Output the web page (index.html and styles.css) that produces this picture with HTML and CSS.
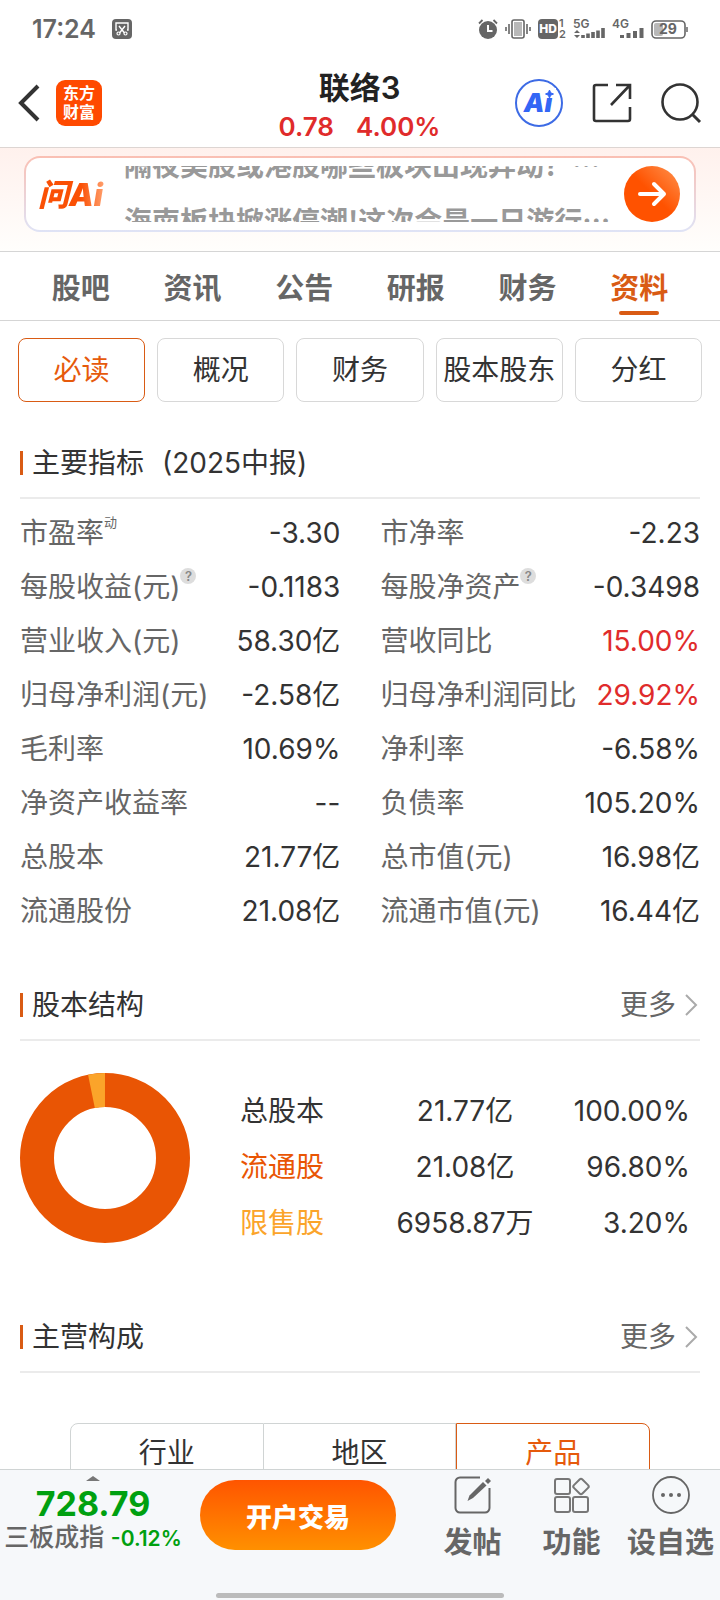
FILE: index.html
```html
<!DOCTYPE html>
<html lang="zh-CN">
<head>
<title>联络3</title>
<meta charset="utf-8">
<meta name="viewport" content="width=device-width, initial-scale=1">
<link rel="stylesheet" href="styles.css">
</head>
<body>

<div class="status">
  <span class="time">17:24</span>
  <svg width="20" height="20" viewBox="0 0 20 20">
    <rect width="20" height="20" rx="4" fill="#666"/>
    <path d="M5 11H4V4h12v7h-1" fill="none" stroke="#fff" stroke-width="1.4"/>
    <path d="M7 7l5.500 7M13 7l-5.500 7" stroke="#fff" stroke-width="1.400"/>
    <circle cx="6.500" cy="14.500" r="1.500" fill="none" stroke="#fff" stroke-width="1.200"/>
    <circle cx="13.500" cy="14.500" r="1.500" fill="none" stroke="#fff" stroke-width="1.200"/>
  </svg>
  <div class="status-icons">
    <svg width="20" height="20" viewBox="0 0 20 20">
      <circle cx="10" cy="11" r="9" fill="#666"/>
      <path d="M10 6v6h4.500" fill="none" stroke="#fff" stroke-width="2"/>
      <path d="M1 4.500L4.500 1M19 4.500L15.500 1" stroke="#666" stroke-width="1.800"/>
    </svg>
    <svg width="26" height="20" viewBox="0 0 26 20">
      <rect x="7" y="1" width="12" height="18" rx="2" fill="none" stroke="#666" stroke-width="1.600"/>
      <rect x="9" y="3" width="8" height="14" fill="#b8b8b8"/>
      <path d="M1 8v4M4 5v10M22 5v10M25 8v4" stroke="#666" stroke-width="1.600"/>
    </svg>
    <svg width="28" height="20" viewBox="0 0 28 20">
      <rect width="20" height="20" rx="4" fill="#666"/>
      <text x="10" y="14" text-anchor="middle" font-size="12" font-weight="800" fill="#fff">HD</text>
      <text x="21" y="8" font-size="11" font-weight="600" fill="#666">1</text>
      <text x="21" y="19" font-size="11" font-weight="600" fill="#666">2</text>
    </svg>
    <svg width="32" height="20" viewBox="0 0 32 20">
      <text x="0" y="9" font-size="12" font-weight="600" fill="#666">5G</text>
      <path d="M1 14l3-3 3 3zM1 16l3 3 3-3z" fill="#666"/>
      <path d="M10 16v3M15 14.500v4.500M20 13v6M25 11.500v7.500M30 9v10" stroke="#666" stroke-width="3.600"/>
    </svg>
    <svg width="32" height="20" viewBox="0 0 32 20">
      <text x="0" y="9" font-size="12" font-weight="600" fill="#666">4G</text>
      <path d="M10 16v3M16.500 14v5M23 12v7M29.500 9v10" stroke="#666" stroke-width="4"/>
    </svg>
    <svg width="37" height="20" viewBox="0 0 37 20">
      <rect x="1" y="2" width="33" height="17" rx="4" fill="none" stroke="#666" stroke-width="1.600"/>
      <rect x="3" y="4" width="9" height="13" rx="2" fill="#b8b8b8"/>
      <path d="M36 8v5" stroke="#666" stroke-width="1.500"/>
      <text x="17" y="15" text-anchor="middle" font-size="14" font-weight="700" fill="#666">29</text>
    </svg>
  </div>
</div>

<header class="header">
  <div class="header-side">
    <a href="#" aria-label="返回">
      <svg width="22" height="38" viewBox="0 0 22 38"><path d="M20 2L3 19l17 17" fill="none" stroke="#333" stroke-width="4"/></svg>
    </a>
    <a class="logo" href="#">东方<br>财富</a>
  </div>
  <div class="header-title">
    <h1>联络3</h1>
    <p class="quote"><span>0.78</span><span>4.00%</span></p>
  </div>
  <div class="header-side header-right">
    <button type="button" aria-label="Ai">
      <svg width="48" height="48" viewBox="0 0 48 48">
        <circle cx="24" cy="24" r="23" fill="none" stroke="#3d6be5" stroke-width="2"/>
        <text x="23" y="33" text-anchor="middle" font-size="26" font-weight="900" font-style="italic" fill="#3366f5">Ai</text>
        <path d="M29 9h12v10H29z" fill="#fff"/>
        <path d="M34.500 11l1.200 2.800 2.800 1.200-2.800 1.200-1.200 2.800-1.200-2.800-2.800-1.200 2.800-1.200z" fill="#3366f5" stroke="#3366f5"/>
      </svg>
    </button>
    <button type="button" aria-label="分享">
      <svg width="40" height="40" viewBox="0 0 40 40" fill="none" stroke="#333" stroke-width="2.600">
        <path d="M16 2H4a2 2 0 0 0-2 2v32a2 2 0 0 0 2 2h32a2 2 0 0 0 2-2V24"/>
        <path d="M24 2h14v14M38 2L19 22"/>
      </svg>
    </button>
    <button type="button" aria-label="搜索">
      <svg width="40" height="40" viewBox="0 0 40 40" fill="none" stroke="#333" stroke-width="2.600">
        <circle cx="19" cy="19" r="17.500"/>
        <path d="M31 31l8 8" stroke-width="3"/>
      </svg>
    </button>
  </div>
</header>

<div class="banner">
  <div class="ask">
    <span class="ask-logo">问Ai</span>
    <div class="ticker">
      <div class="ticker-lines">
        <p>隔夜美股或港股哪些板块出现异动？…</p>
        <p>海南板块掀涨停潮!这次会是一日游行…</p>
      </div>
    </div>
    <button class="go" type="button" aria-label="提问">
      <svg width="30" height="26" viewBox="0 0 30 26" fill="none" stroke="#fff" stroke-width="4" stroke-linecap="round" stroke-linejoin="round"><path d="M3 13h24M17 3l10 10-10 10"/></svg>
    </button>
  </div>
</div>

<nav class="tabs">
  <a href="#">股吧</a>
  <a href="#">资讯</a>
  <a href="#">公告</a>
  <a href="#">研报</a>
  <a href="#">财务</a>
  <a href="#" class="active">资料</a>
</nav>

<main>
  <div class="chips">
    <button type="button" class="active">必读</button>
    <button type="button">概况</button>
    <button type="button">财务</button>
    <button type="button">股本股东</button>
    <button type="button">分红</button>
  </div>

  <section>
    <div class="section-head">
      <h2>主要指标<span class="period">(2025中报)</span></h2>
    </div>
    <table class="metrics">
      <tr><th>市盈率<sup>动</sup></th><td>-3.30</td><th>市净率</th><td>-2.23</td></tr>
      <tr><th>每股收益(元)<sup class="help">?</sup></th><td>-0.1183</td><th>每股净资产<sup class="help">?</sup></th><td>-0.3498</td></tr>
      <tr><th>营业收入(元)</th><td>58.30亿</td><th>营收同比</th><td class="up">15.00%</td></tr>
      <tr><th>归母净利润(元)</th><td>-2.58亿</td><th>归母净利润同比</th><td class="up">29.92%</td></tr>
      <tr><th>毛利率</th><td>10.69%</td><th>净利率</th><td>-6.58%</td></tr>
      <tr><th>净资产收益率</th><td>--</td><th>负债率</th><td>105.20%</td></tr>
      <tr><th>总股本</th><td>21.77亿</td><th>总市值(元)</th><td>16.98亿</td></tr>
      <tr><th>流通股份</th><td>21.08亿</td><th>流通市值(元)</th><td>16.44亿</td></tr>
    </table>
  </section>

  <section>
    <div class="section-head">
      <h2>股本结构</h2>
      <a class="more" href="#">更多
        <svg width="13" height="22" viewBox="0 0 13 22"><path d="M1 1l10 10L1 21" fill="none" stroke="#aaa" stroke-width="2"/></svg>
      </a>
    </div>
    <div class="shares">
      <svg class="donut" width="170" height="170" viewBox="0 0 170 170" fill="none" stroke-width="34">
        <circle cx="85" cy="85" r="68" stroke="#e95504"/>
        <circle cx="85" cy="85" r="68" stroke="#fba42a" pathLength="100" stroke-dasharray="3.200 96.800" transform="rotate(-101.500 85 85)"/>
      </svg>
      <div class="share-box">
        <table class="share-table">
          <tr><th>总股本</th><td>21.77亿</td><td>100.00%</td></tr>
          <tr><th class="float">流通股</th><td>21.08亿</td><td>96.80%</td></tr>
          <tr><th class="locked">限售股</th><td>6958.87万</td><td>3.20%</td></tr>
        </table>
      </div>
    </div>
  </section>

  <section>
    <div class="section-head">
      <h2>主营构成</h2>
      <a class="more" href="#">更多
        <svg width="13" height="22" viewBox="0 0 13 22"><path d="M1 1l10 10L1 21" fill="none" stroke="#aaa" stroke-width="2"/></svg>
      </a>
    </div>
    <div class="segments">
      <button type="button">行业</button>
      <button type="button">地区</button>
      <button type="button" class="active">产品</button>
    </div>
  </section>
</main>

<footer class="bottom">
  <div class="bar">
    <a class="index" href="#">
      <svg width="14" height="5" viewBox="0 0 14 5"><path d="M0 5l7-5 7 5z" fill="#777"/></svg>
      <strong>728.79</strong>
      <span class="index-name">三板成指 <em>-0.12%</em></span>
    </a>
    <button class="trade" type="button">开户交易</button>
    <div class="actions">
      <a href="#">
        <svg width="38" height="38" viewBox="0 0 38 38" fill="none" stroke="#666" stroke-width="2">
          <path d="M26 1.500H6A4.500 4.500 0 0 0 1.500 6v26A4.500 4.500 0 0 0 6 36.500h25a4.500 4.500 0 0 0 4.500-4.500V12"/>
          <path d="M13.500 25l2-5.500L29 6l3.500 3.500L19 22z" fill="#666" stroke="none"/>
          <path d="M31 5l3-3 3 3-3 3z" fill="#666" stroke="none"/>
        </svg>
        发帖
      </a>
      <a href="#">
        <svg width="38" height="38" viewBox="0 0 38 38" fill="none" stroke="#777" stroke-width="2">
          <rect x="2" y="3" width="15" height="15" rx="2"/>
          <rect x="2" y="21" width="15" height="15" rx="2"/>
          <rect x="20" y="21" width="15" height="15" rx="2"/>
          <rect x="22" y="4.500" width="12" height="12" rx="2" transform="rotate(45 28 10.500)"/>
        </svg>
        功能
      </a>
      <a href="#">
        <svg width="38" height="38" viewBox="0 0 38 38">
          <circle cx="19" cy="19" r="18" fill="none" stroke="#666" stroke-width="1.800"/>
          <g fill="#666"><circle cx="11" cy="19" r="2"/><circle cx="19" cy="19" r="2"/><circle cx="27" cy="19" r="2"/></g>
        </svg>
        设自选
      </a>
    </div>
  </div>
  <div class="home"></div>
</footer>

</body>
</html>
```
FILE: styles.css
```css
* {
  box-sizing: border-box;
}

body {
  display: flex;
  flex-direction: column;
  height: 100vh;
  margin: 0;
  background: #fff;
  color: #333;
  font-family: Inter, "Noto Sans CJK SC", sans-serif;
  font-size: 28px;
}

h1, h2, p {
  margin: 0;
}

a {
  color: inherit;
  text-decoration: none;
}

button {
  padding: 0;
  border: none;
  background: none;
  color: inherit;
  font: inherit;
  cursor: pointer;
}

svg {
  display: block;
  flex: none;
  overflow: visible;
}

/* Phone status bar */
.status {
  display: flex;
  align-items: center;
  gap: 16px;
  height: 58px;
  padding: 0 32px;
  color: #666;
}

.time {
  font-size: 25px;
  font-weight: 600;
}

.status-icons {
  display: flex;
  gap: 7px;
  margin-left: auto;
}

/* Header */
.header {
  display: flex;
  height: 90px;
  padding: 0 19px 0 18px;
  border-bottom: 1px solid #ddd5d2;
}

.header-side {
  display: flex;
  flex: 1;
  align-items: center;
  gap: 16px;
}

.header-right {
  justify-content: flex-end;
  gap: 29px;
}

.logo {
  width: 46px;
  height: 46px;
  padding: 4px 0;
  border-radius: 9px;
  background: #ff4a00;
  color: #fff;
  font-size: 16px;
  font-weight: 700;
  line-height: 19px;
  text-align: center;
}

.header-title {
  padding-top: 10px;
  text-align: center;
}

h1 {
  color: #222;
  font-size: 31px;
  font-weight: 600;
  line-height: 40px;
}

.quote {
  display: flex;
  gap: 22px;
  color: #e02b2b;
  font-size: 26px;
  font-weight: 600;
  line-height: 38px;
}

/* Ask banner */
.banner {
  padding: 8px 24px 19px;
  border-bottom: 1px solid #d5d5d5;
  background: linear-gradient(#fff1ed, #fffefc);
}

.ask {
  display: flex;
  align-items: center;
  height: 76px;
  padding: 0 14px 0 12px;
  border: 2px solid transparent;
  border-radius: 16px;
  background: linear-gradient(#fff, #fff) padding-box, linear-gradient(#fabfb3, #dfe3f6) border-box;
}

.ask-logo {
  width: 86px;
  padding-bottom: 4px;
  background: linear-gradient(90deg, #fa5005 50%, #ff9a66 75%);
  background-clip: text;
  color: transparent;
  font-size: 31px;
  font-style: italic;
  font-weight: 900;
}

.ticker {
  flex: 1;
  height: 56px;
  overflow: hidden;
  color: #999;
  font-family: "Noto Sans CJK SC", sans-serif;
  font-weight: 600;
  line-height: 56px;
  white-space: nowrap;
}

.ticker-lines {
  margin-top: -30px;
}

.go {
  display: flex;
  align-items: center;
  justify-content: center;
  width: 56px;
  height: 56px;
  border-radius: 50%;
  background: linear-gradient(45deg, #ff5200 50%, #ff9450);
}

/* Tabs */
.tabs {
  display: flex;
  flex: none;
  height: 69px;
  padding: 0 25px;
  border-bottom: 1px solid #d5d5d5;
  color: #666;
  font-size: 29px;
  font-weight: 600;
}

.tabs a {
  display: flex;
  flex: 1;
  flex-direction: column;
  align-items: center;
  line-height: 74px;
}

.tabs .active {
  color: #d95b14;
}

.tabs .active::after {
  content: "";
  width: 40px;
  height: 4px;
  margin-top: -15px;
  border-radius: 2px;
  background: #d95b14;
}

/* Content */
main {
  flex: 1;
  min-height: 0;
  overflow-y: auto;
  scrollbar-width: none;
}

.chips {
  display: grid;
  grid-template-columns: repeat(5, 1fr);
  gap: 12px;
  padding: 17px 18px 27px;
}

.chips button {
  height: 64px;
  padding-bottom: 4px;
  border: 1px solid #d8d8d8;
  border-radius: 8px;
}

.chips .active {
  border-color: #d95b14;
  color: #e65a0c;
}

section {
  margin: 0 20px;
}

.section-head {
  display: flex;
  align-items: center;
  justify-content: space-between;
  height: 70px;
  border-bottom: 2px solid #ebebeb;
}

h2 {
  display: flex;
  align-items: center;
  font-size: 28px;
  font-weight: 400;
  line-height: 36px;
}

h2::before {
  content: "";
  width: 3px;
  height: 24px;
  margin-right: 9px;
  background: #d95b14;
}

.period {
  margin-left: 18px;
}

.more {
  display: flex;
  align-items: center;
  gap: 9px;
  padding-right: 2px;
  color: #666;
  line-height: 36px;
}

table {
  border-collapse: collapse;
  table-layout: fixed;
  width: 100%;
}

th, td {
  padding: 0;
  font-weight: 400;
  line-height: 40px;
  white-space: nowrap;
}

th {
  text-align: left;
}

.metrics {
  margin: 7px 0 33px;
}

.metrics tr {
  height: 54px;
}

.metrics th {
  width: 29%;
  color: #666;
}

.metrics td {
  width: 18%;
  text-align: right;
}

.metrics td:nth-child(2) {
  width: 24%;
  padding-right: 40px;
}

.metrics .up {
  color: #e02b2b;
}

sup {
  display: inline-block;
  font-size: 13px;
  line-height: 16px;
  vertical-align: 16px;
}

.help {
  width: 16px;
  border-radius: 50%;
  background: #ddd;
  color: #888;
  font-weight: 600;
  text-align: center;
}

.shares {
  display: flex;
  align-items: flex-start;
  padding: 32px 10px 52px 0;
}

.share-box {
  flex: 1;
  margin: 10px 0 0 50px;
}

.share-table tr {
  height: 56px;
}

.share-table td {
  text-align: center;
}

.share-table td:last-child {
  text-align: right;
}

.share-table .float {
  color: #e95504;
}

.share-table .locked {
  color: #fba42a;
}

.segments {
  display: flex;
  padding: 50px 50px 20px;
}

.segments button {
  flex: 1;
  height: 60px;
  padding-bottom: 4px;
  border: 1px solid #d0d4d4;
}

.segments button + button {
  border-left: none;
}

.segments button:first-child {
  border-radius: 8px 0 0 8px;
}

.segments button.active {
  border: 1px solid #d95b14;
  border-radius: 0 8px 8px 0;
  color: #e65a0c;
}

/* Bottom bar */
.bottom {
  flex: none;
  height: 131px;
  border-top: 1px solid #d0d4d4;
  background: #f6f8fa;
}

.bar {
  display: flex;
  height: 123px;
  padding-top: 6px;
}

.index {
  display: flex;
  flex-direction: column;
  align-items: center;
  width: 186px;
  color: #00a010;
}

.index strong {
  font-size: 34px;
  font-weight: 700;
  line-height: 46px;
}

.index-name {
  color: #666;
  font-size: 25px;
  font-weight: 500;
  line-height: 20px;
  white-space: nowrap;
}

.index-name em {
  color: #00a010;
  font-size: 21px;
  font-style: normal;
  font-weight: 600;
}

.trade {
  width: 196px;
  height: 70px;
  margin: 4px 0 0 14px;
  border-radius: 35px;
  background: linear-gradient(#ff5500, #ff9000);
  color: #fff;
  font-size: 26px;
  font-weight: 800;
}

.actions {
  display: flex;
  flex: 1;
  padding-left: 27px;
  color: #666;
  font-size: 29px;
  font-weight: 600;
}

.actions a {
  display: flex;
  flex: 1;
  flex-direction: column;
  align-items: center;
  gap: 7px;
  line-height: 44px;
  white-space: nowrap;
}

.home {
  width: 40%;
  height: 5px;
  margin: 0 auto;
  border-radius: 3px;
  background: #bbb;
}
```
